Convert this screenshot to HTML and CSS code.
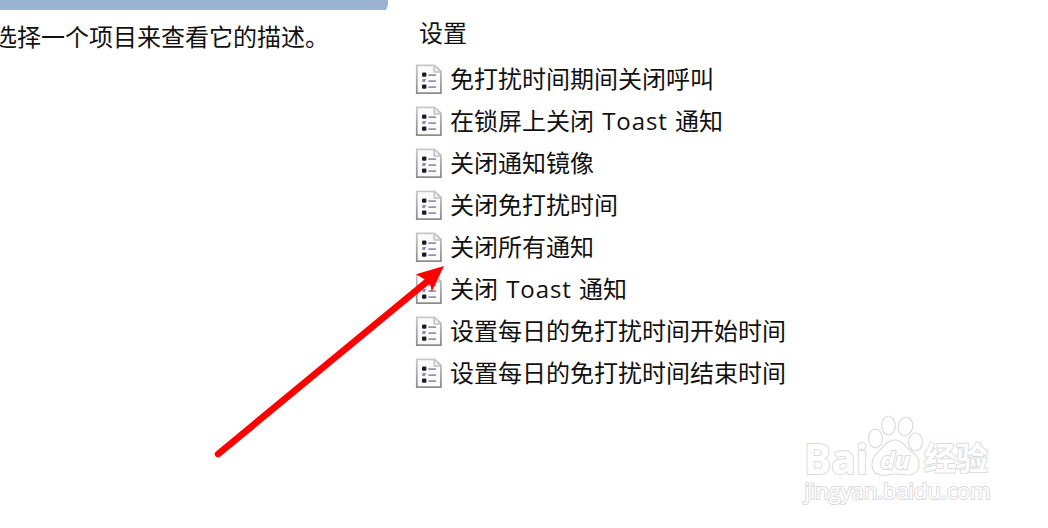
FILE: index.html
```
<!DOCTYPE html>
<html lang="zh-CN">
<head>
<meta charset="UTF-8" />
<meta name="viewport" content="width=device-width, initial-scale=1" />
<title>设置</title>
<link rel="stylesheet" href="styles.css">
</head>
<body>

<!-- Símbolo usado em cada item da lista -->
<svg class="defs" width="0" height="0">
  <defs>
    <linearGradient id="borda" x1="0" y1="0" x2="0" y2="1">
      <stop offset="0" stop-color="#c8c8c8" />
      <stop offset="1" stop-color="#8c8c8c" />
    </linearGradient>
    <symbol id="doc" viewBox="0 0 27 31">
      <path d="M1.8 1.3H19.5L25.9 7.5V29.2H1.8Z" fill="#fbfbfb" stroke="url(#borda)" stroke-width="1.8" />
      <path d="M19.2 2V8H25" fill="#eee" stroke="#c4c4c4" stroke-width="1.6" />
      <rect x="7" y="8.5" width="4.4" height="4.2" rx="1.2" fill="#1c1a22" />
      <path d="M7.3 18V15H11.2L9.8 18Z" fill="#8f8ab2" />
      <rect x="7" y="20.4" width="4.4" height="4.4" rx="1.2" fill="#1c1a22" />
      <path d="M13.4 11.2H21M13.4 17.2H21M13.4 23.2H21" stroke="#9692b2" stroke-width="1.8" />
    </symbol>
  </defs>
</svg>

<div class="page">
  <div class="descricao">
    <div class="barra"></div>
    <p>选择一个项目来查看它的描述。</p>
  </div>

  <div class="lista">
    <h2>设置</h2>
    <div class="item"><svg><use href="#doc" /></svg><span>免打扰时间期间关闭呼叫</span></div>
    <div class="item"><svg><use href="#doc" /></svg><span>在锁屏上关闭 <b>Toast</b> 通知</span></div>
    <div class="item"><svg><use href="#doc" /></svg><span>关闭通知镜像</span></div>
    <div class="item"><svg><use href="#doc" /></svg><span>关闭免打扰时间</span></div>
    <div class="item"><svg><use href="#doc" /></svg><span>关闭所有通知</span></div>
    <div class="item"><svg><use href="#doc" /></svg><span>关闭 <b>Toast</b> 通知</span></div>
    <div class="item"><svg><use href="#doc" /></svg><span>设置每日的免打扰时间开始时间</span></div>
    <div class="item"><svg><use href="#doc" /></svg><span>设置每日的免打扰时间结束时间</span></div>
  </div>
</div>

<!-- Seta vermelha -->
<svg class="seta" viewBox="0 0 240 200">
  <path d="M8.2 191L219 17" stroke="#f00" stroke-width="6.8" stroke-linecap="round" />
  <path d="M234 3L206 11.3L215.2 16.8L220.5 22L221.7 28.7Z" fill="#f00" />
</svg>

<!-- Marca d'água -->
<svg class="marca" viewBox="0 0 200 100">
  <text class="logo" x="2" y="64.5" font-size="42" textLength="64" lengthAdjust="spacingAndGlyphs">Bai</text>
  <ellipse cx="73.5" cy="29.5" rx="7" ry="9.3" />
  <ellipse cx="86.5" cy="16.5" rx="6.8" ry="9.5" />
  <ellipse cx="103.5" cy="17.5" rx="7.2" ry="9.3" transform="rotate(12 103.5 17.5)" />
  <ellipse cx="113.5" cy="33" rx="7" ry="9" />
  <path d="M93 31C101 31 103 38 110 43C121 50 119 66 106 66C100 66 98 65 93 65C88 65 85 67 79 66C67 65 68 51 76 43C83 37 85 31 93 31Z" />
  <text class="du" x="78" y="60" font-size="24" textLength="30" lengthAdjust="spacingAndGlyphs">du</text>
  <text class="cn" x="122" y="61" font-size="32" textLength="64" lengthAdjust="spacingAndGlyphs">经验</text>
  <text class="site" x="2.5" y="90" font-size="21" textLength="186" lengthAdjust="spacingAndGlyphs">jingyan.baidu.com</text>
</svg>

</body>
</html>
```
FILE: styles.css
```
body {
  margin: 0;
  height: 528px;
  position: relative;
  overflow: hidden;
  background-color: #fff;
  color: #111;
  font-family: "Open Sans", "Noto Sans CJK SC", sans-serif;
  font-size: 24px;
}
.defs {
  position: absolute;
}
.page {
  display: flex;
}
.descricao {
  width: 415px;
}
.barra {
  width: 388px;
  height: 10px;
  background-color: #9ab3d1;
  clip-path: polygon(0 0, 100% 0, 100% 50%, 99.5% 100%, 0 100%);
}
.descricao p {
  margin: 6px 0 0 -7px;
  line-height: 42px;
  white-space: nowrap;
}
.lista h2 {
  margin: 12px 0 4px 4px;
  font-size: 24px;
  font-weight: normal;
  line-height: 42px;
}
.item {
  display: flex;
  align-items: center;
  gap: 8px;
  height: 42px;
  line-height: 42px;
  white-space: nowrap;
}
.item svg {
  width: 27px;
  height: 31px;
}
.item b {
  margin: 0 1px 0 2px;
  font-weight: normal;
  letter-spacing: 0.9px;
}
/* Seta */
.seta {
  position: absolute;
  left: 210px;
  top: 263px;
  width: 240px;
  height: 200px;
}
/* Marca d'água */
.marca {
  position: absolute;
  left: 802px;
  top: 409px;
  width: 200px;
  height: 100px;
  fill: #fff;
  stroke: #dcdcdc;
  stroke-width: 1.2;
}
.marca text {
  font-family: "Open Sans", "Noto Sans CJK SC", sans-serif;
  paint-order: stroke;
  stroke-width: 2;
}
.marca .logo,
.marca .cn {
  font-weight: bold;
}
.marca .du {
  font-weight: bold;
  font-style: italic;
}
```
